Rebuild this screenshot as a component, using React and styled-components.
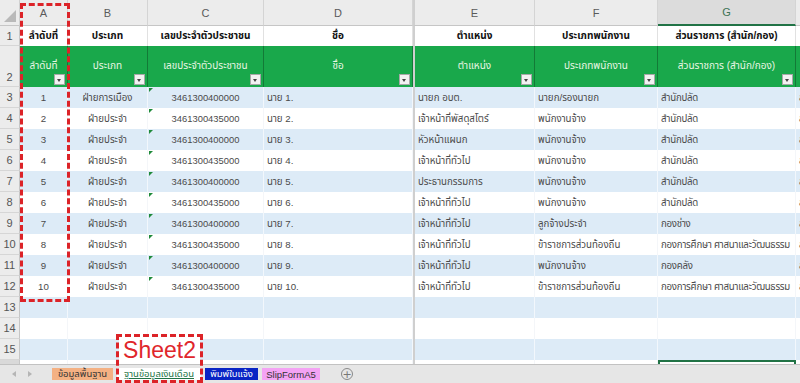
import styled, { createGlobalStyle } from "styled-components";

const GlobalStyle = createGlobalStyle`
  html, body {
    margin: 0;
    padding: 0;
    background: #fff;
  }
  * {
    box-sizing: border-box;
  }
`;

const FONT = `"Liberation Sans", "Noto Sans Thai", "Noto Sans", "DejaVu Sans", sans-serif`;

const COLUMNS = [
  { key: "A", width: 48, title: "ลำดับที่", align: "center" },
  { key: "B", width: 80, title: "ประเภท", align: "center" },
  { key: "C", width: 116, title: "เลขประจำตัวประชาชน", align: "center", flag: true, num: true },
  { key: "D", width: 149, title: "ชื่อ", align: "left" },
  { key: "E", width: 122, title: "ตำแหน่ง", align: "left", frozen: true },
  { key: "F", width: 123, title: "ประเภทพนักงาน", align: "left" },
  { key: "G", width: 138, title: "ส่วนราชการ (สำนัก/กอง)", align: "left", tight: true },
  { key: "H", width: 100, title: "", align: "left" },
];

const DATA = [
  [1, "ฝ่ายการเมือง", "3461300400000", "นาย 1.", "นายก อบต.", "นายก/รองนายก", "สำนักปลัด", "สังกัด"],
  [2, "ฝ่ายประจำ", "3461300435000", "นาย 2.", "เจ้าหน้าที่พัสดุสโตร์", "พนักงานจ้าง", "สำนักปลัด", "สังกัด"],
  [3, "ฝ่ายประจำ", "3461300400000", "นาย 3.", "หัวหน้าแผนก", "พนักงานจ้าง", "สำนักปลัด", "สังกัด"],
  [4, "ฝ่ายประจำ", "3461300435000", "นาย 4.", "เจ้าหน้าที่ทั่วไป", "พนักงานจ้าง", "สำนักปลัด", "สังกัด"],
  [5, "ฝ่ายประจำ", "3461300400000", "นาย 5.", "ประธานกรรมการ", "พนักงานจ้าง", "สำนักปลัด", "สังกัด"],
  [6, "ฝ่ายประจำ", "3461300435000", "นาย 6.", "เจ้าหน้าที่ทั่วไป", "พนักงานจ้าง", "สำนักปลัด", "สังกัด"],
  [7, "ฝ่ายประจำ", "3461300400000", "นาย 7.", "เจ้าหน้าที่ทั่วไป", "ลูกจ้างประจำ", "กองช่าง", "สังกัด"],
  [8, "ฝ่ายประจำ", "3461300435000", "นาย 8.", "เจ้าหน้าที่ทั่วไป", "ข้าราชการส่วนท้องถิ่น", "กองการศึกษา ศาสนาและวัฒนธรรม", "สังกัด"],
  [9, "ฝ่ายประจำ", "3461300400000", "นาย 9.", "เจ้าหน้าที่ทั่วไป", "พนักงานจ้าง", "กองคลัง", "สังกัด"],
  [10, "ฝ่ายประจำ", "3461300435000", "นาย 10.", "เจ้าหน้าที่ทั่วไป", "ข้าราชการส่วนท้องถิ่น", "กองการศึกษา ศาสนาและวัฒนธรรม", "สังกัด"],
];

const EMPTY_ROWS = [13, 14, 15, 16];

const Sheet = styled.div`
  position: relative;
  width: 800px;
  height: 383px;
  display: flex;
  flex-direction: column;
  overflow: hidden;
  font-family: ${FONT};
  background: #fff;
`;

const Grid = styled.div`
  flex: 1;
  display: grid;
  grid-template-columns: 20px ${COLUMNS.map((c) => `${c.width}px`).join(" ")};
  grid-template-rows: 26px 20px 41px repeat(14, 21px);
  overflow: hidden;
`;

const Corner = styled.div`
  position: relative;
  background: #ececec;
  border-right: 1px solid #d0d0d0;
  border-bottom: 1px solid #c6c6c6;

  &::after {
    content: "";
    position: absolute;
    right: 3px;
    bottom: 3px;
    border-left: 12px solid transparent;
    border-bottom: 12px solid #b9b9b9;
  }
`;

const ColHead = styled.div`
  display: flex;
  align-items: center;
  justify-content: center;
  font-size: 11px;
  color: ${(p) => (p.$active ? "#3d7255" : "#5a5a5a")};
  background: ${(p) => (p.$active ? "#dcdcdc" : "#ececec")};
  border-right: 1px solid #d4d4d4;
  border-left: ${(p) => (p.$frozen ? "2px solid #cfcfcf" : "none")};
  border-bottom: ${(p) => (p.$active ? "2px solid #217346" : "1px solid #c6c6c6")};
`;

const RowHead = styled.div`
  display: flex;
  align-items: ${(p) => (p.$bottom ? "flex-end" : "center")};
  justify-content: center;
  padding-bottom: ${(p) => (p.$bottom ? "3px" : "0")};
  font-size: 11px;
  color: #555;
  background: ${(p) => (p.$active ? "#d9d9d9" : "#ececec")};
  border-right: 1px solid #c6c6c6;
  border-bottom: 1px solid #d6d6d6;
`;

const TitleCell = styled.div`
  display: flex;
  align-items: center;
  justify-content: center;
  font-size: 10px;
  font-weight: bold;
  color: #111;
  white-space: nowrap;
  overflow: hidden;
  border-right: 1px solid #e1e1e1;
  border-left: ${(p) => (p.$frozen ? "2px solid #cfcfcf" : "none")};
`;

const FilterCell = styled.div`
  position: relative;
  display: flex;
  align-items: center;
  justify-content: center;
  padding-bottom: 2px;
  font-size: 10px;
  color: #eaf6e4;
  background: #19a84b;
  white-space: nowrap;
  border-right: 1px solid #137a37;
  border-left: ${(p) => (p.$frozen ? "2px solid #cfcfcf" : "none")};
`;

const FilterButton = styled.span`
  position: absolute;
  right: 2px;
  bottom: 2px;
  width: 11px;
  height: 11px;
  background: #f2f2f2;
  border: 1px solid #a8a8a8;

  &::after {
    content: "";
    position: absolute;
    left: 2px;
    top: 4px;
    border-left: 2.5px solid transparent;
    border-right: 2.5px solid transparent;
    border-top: 3px solid #444;
  }
`;

const DataCell = styled.div`
  position: relative;
  display: flex;
  align-items: center;
  justify-content: ${(p) => (p.$align === "center" ? "center" : "flex-start")};
  padding: 0 3px;
  font-size: ${(p) => (p.$num ? "9.4px" : "9.7px")};
  letter-spacing: ${(p) => (p.$tight ? "-0.25px" : "normal")};
  color: #4a4a4a;
  white-space: nowrap;
  overflow: hidden;
  background: ${(p) => (p.$band ? "#ddebf7" : "#fff")};
  border-right: 1px solid ${(p) => (p.$band ? "#f2f7fc" : "#f4f6f9")};
  border-left: ${(p) => (p.$frozen ? "2px solid #cfcfcf" : "none")};
  outline: ${(p) => (p.$selected ? "2px solid #217346" : "none")};
  outline-offset: -2px;
`;

const TextFlag = styled.span`
  position: absolute;
  left: 1px;
  top: 1px;
  border-top: 4px solid #1f8a3a;
  border-right: 4px solid transparent;
`;

const Highlight = styled.div`
  position: absolute;
  border: 3px dashed #dc2328;
  display: flex;
  flex-direction: column;
`;

const HighlightLabel = styled.div`
  height: 27px;
  background: #fff;
  display: flex;
  align-items: center;
  justify-content: center;
  font-family: "Liberation Sans", Arial, sans-serif;
  font-size: 23px;
  color: #e0262b;
  line-height: 1;
`;

const TabBar = styled.div`
  height: 19px;
  flex-shrink: 0;
  display: flex;
  align-items: flex-start;
  padding: 3px 0 0 12px;
  gap: 4px;
  background: #e6e6e6;
  border-top: 1px solid #c2c2c2;
`;

const NavArrow = styled.span`
  width: 0;
  height: 0;
  margin: 3px 6px 0 0;
  border-top: 3px solid transparent;
  border-bottom: 3px solid transparent;
  ${(p) => (p.$left ? "border-right: 4px solid #b5b5b5;" : "border-left: 4px solid #b5b5b5;")}
`;

const NavGroup = styled.div`
  display: flex;
  gap: 6px;
  width: 36px;
`;

const Tab = styled.div`
  height: 12px;
  width: ${(p) => p.$w}px;
  display: flex;
  align-items: center;
  justify-content: center;
  font-size: 9.5px;
  white-space: nowrap;
  color: ${(p) => p.$color};
  background: ${(p) => p.$bg};
  text-decoration: ${(p) => (p.$active ? "underline" : "none")};
`;

const AddButton = styled.span`
  margin-left: 17px;
  width: 12px;
  height: 12px;
  border: 1px solid #8a8a8a;
  border-radius: 50%;
  display: flex;
  align-items: center;
  justify-content: center;
  font-size: 11px;
  line-height: 1;
  color: #777;
  font-family: "DejaVu Sans", sans-serif;
`;

const TABS = [
  { name: "ข้อมูลพื้นฐาน", w: 61, bg: "#f4b183", color: "#333" },
  { name: "ฐานข้อมูลเงินเดือน", w: 84, bg: "#fff", color: "#217346", active: true },
  { name: "พิมพ์ใบแจ้ง", w: 53, bg: "#0a24c4", color: "#fff" },
  { name: "SlipFormA5", w: 58, bg: "#f4a3f4", color: "#333" },
];

export default function App() {
  return (
    <>
      <GlobalStyle />
      <Sheet>
        <Grid>
          <Corner />
          {COLUMNS.map((c) => (
            <ColHead key={c.key} $active={c.key === "G"} $frozen={c.frozen}>
              {c.key}
            </ColHead>
          ))}

          <RowHead>1</RowHead>
          {COLUMNS.map((c) => (
            <TitleCell key={c.key} $frozen={c.frozen}>
              {c.title}
            </TitleCell>
          ))}

          <RowHead $bottom>2</RowHead>
          {COLUMNS.map((c) => (
            <FilterCell key={c.key} $frozen={c.frozen}>
              {c.title}
              {c.title && <FilterButton />}
            </FilterCell>
          ))}

          {DATA.map((row, i) => {
            const band = i % 2 === 0;
            return [
              <RowHead key={`h${i}`}>{i + 3}</RowHead>,
              ...COLUMNS.map((c, j) => (
                <DataCell
                  key={`${i}-${c.key}`}
                  $band={band}
                  $align={c.align}
                  $frozen={c.frozen}
                  $num={c.num}
                  $tight={c.tight}
                >
                  {c.flag && <TextFlag />}
                  {row[j]}
                </DataCell>
              )),
            ];
          })}

          {EMPTY_ROWS.map((n) => {
            const band = n % 2 === 1;
            return [
              <RowHead key={`h${n}`} $active={n === 16}>
                {n}
              </RowHead>,
              ...COLUMNS.map((c) => (
                <DataCell
                  key={`${n}-${c.key}`}
                  $band={band}
                  $frozen={c.frozen}
                  $selected={n === 16 && c.key === "G"}
                />
              )),
            ];
          })}
        </Grid>

        <TabBar>
          <NavGroup>
            <NavArrow $left />
            <NavArrow />
          </NavGroup>
          {TABS.map((t) => (
            <Tab key={t.name} $w={t.w} $bg={t.bg} $color={t.color} $active={t.active}>
              {t.name}
            </Tab>
          ))}
          <AddButton>+</AddButton>
        </TabBar>

        <Highlight style={{ left: 20, top: 3, width: 50, height: 299 }} />
        <Highlight style={{ left: 116, top: 334, width: 87, height: 49 }}>
          <HighlightLabel>Sheet2</HighlightLabel>
        </Highlight>
      </Sheet>
    </>
  );
}
